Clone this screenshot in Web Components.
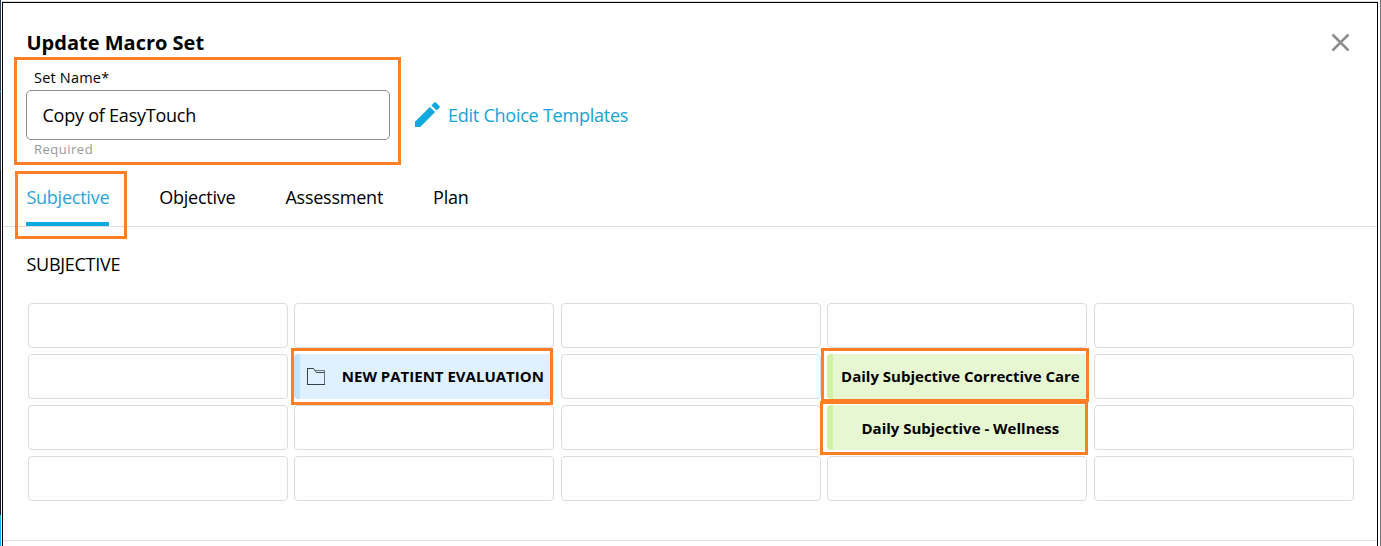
<!DOCTYPE html>
<html lang="en">
<head>
<meta charset="utf-8">
<title>Update Macro Set</title>
<style>
html,body{margin:0;height:100%;overflow:hidden;background:#fff}
body{font-family:"Open Sans","Noto Sans",sans-serif;color:#000}
</style>
</head>
<body>
<macro-dialog></macro-dialog>
<script>
const define=(name,html,setup)=>customElements.define(name,class extends HTMLElement{
  connectedCallback(){
    if(this.shadowRoot)return;
    const t=document.createElement('template');
    t.innerHTML='<style>*{box-sizing:border-box}:host([hidden]){display:none}</style>'+html;
    this.attachShadow({mode:'open'}).append(t.content.cloneNode(true));
    if(setup)setup(this,this.shadowRoot);
  }
});

/* Orange frame laid over the element it is placed in */
define('high-light',`<style>:host{position:absolute;box-sizing:border-box;border:3px solid #ff7f27;z-index:2;pointer-events:none}</style>`);

define('dialog-header',`<style>
:host{display:flex;justify-content:space-between;height:54px;padding:26px 27.5px 0 23.5px}
h1{margin:0;font-size:20px;line-height:28px;font-weight:700}
svg{display:block;margin-top:3.5px}
</style><h1><slot></slot></h1>
<svg width="19" height="19" viewBox="0 0 19 19" role="img" aria-label="Close"><path d="M1.5 1.5L17.5 17.5M17.5 1.5L1.5 17.5" stroke="#8c8c8c" stroke-width="2.5" fill="none"/></svg>`);

define('text-field',`<style>
:host{display:block;width:364px;position:relative}
label,small{display:block;padding-left:8px}
label{font-size:14.5px;line-height:20px;height:23px;padding-top:1px;letter-spacing:.2px;margin-top:10px}
.box{height:50px;border:1px solid #8f8f8f;border-radius:5px;padding-left:15.5px;font-size:18px;line-height:49px;letter-spacing:-.23px}
small{font-size:13px;line-height:18px;color:#999;letter-spacing:.5px}
high-light{left:-12px;top:0;width:387px;height:108px}
</style><label><slot name="label"></slot></label><div class="box"><slot></slot></div><small><slot name="hint"></slot></small><high-light></high-light>`);

define('edit-link',`<style>
:host{display:flex;align-items:center;gap:8px;color:#14a3d8;font-size:18px;line-height:26px;letter-spacing:-.24px}
svg{display:block;margin-top:-1px}
</style><svg width="25" height="25" viewBox="0 0 25 25" fill="#0eaadf"><path d="M0 19.8L14.9 4.9L20.1 10.1L5.2 25H0ZM16.4 3.4L19.2.6Q20.1-.2 21 .6L24.4 4Q25.3 4.9 24.4 5.8L21.6 8.6Z"/></svg><span><slot></slot></span>`);

define('tab-item',`<style>
:host{display:block;position:relative;height:44px;padding-top:2px;font-size:18px;line-height:26px;letter-spacing:-.24px}
:host([active]){color:#2ba4da;border-bottom:4px solid #0eaadf}
high-light{left:-11.4px;top:-11px;width:112px;height:68px}
</style><slot></slot>`,(host,root)=>{if(host.hasAttribute('active'))root.append(document.createElement('high-light'))});

define('tab-bar',`<style>:host{display:flex;gap:50px;height:45px;padding-left:23.4px;border-bottom:1px solid #dedede}</style><slot></slot>`);

define('macro-cell',`<style>
:host{display:flex;position:relative;height:45px;border:1px solid #dcdcdc;border-radius:4px;align-items:center;justify-content:center;font-size:15px;font-weight:700;line-height:20px;white-space:nowrap}
:host([kind]){border:0;border-left:6px solid}
:host([kind=folder]){background:#dff1ff;border-color:#bfe3ff;gap:17px;padding-right:4px}
:host([kind=macro]){background:#e7f7d1;border-color:#d0f2a2}
:host([raised]) span{padding-bottom:2px}
svg{display:none}
:host([kind=folder]) svg{display:block}
</style><svg width="18" height="17" viewBox="0 0 18 17" fill="none" stroke="#37414a"><path d="M.5 0V17M0 .5H6.5L9.5 4.5H17.5"/><path d="M0 16.5H18"/><path d="M8 2.5H17.5V16" stroke="#68747d"/></svg><span><slot></slot></span><slot name="mark"></slot>`);

define('macro-grid',`<style>
:host{display:grid;grid-template-columns:repeat(5,260px);justify-content:space-between;gap:6px;width:1326px;margin:25px 0 0 24.9px}
.one{left:-3px;top:-6px;width:262px;height:57px}
.two{left:-6px;top:-6px;width:268px;height:54px}
.three{left:-7px;top:-4px;width:268px;height:54px}
.one,.two,.three{margin-left:-6px}
</style>`,(host,root)=>{
  const items={6:['folder','NEW PATIENT EVALUATION','one'],8:['macro','Daily Subjective Corrective Care','two'],13:['macro','Daily Subjective - Wellness','three']};
  for(let i=0;i<20;i++){
    const c=document.createElement('macro-cell');
    if(items[i]){
      const[k,t,n]=items[i];
      c.setAttribute('kind',k);c.toggleAttribute('raised',i<10);c.textContent=t;
      const h=document.createElement('high-light');h.className=n;h.slot='mark';c.append(h);
    }
    root.append(c);
  }
});

define('macro-dialog',`<style>
:host{display:grid;grid-template-columns:1px 1px 1fr 2px 1px;height:546px;overflow:hidden}
.strip{background:linear-gradient(#2b3d5e 0 91px,#12b4e8 91px 92px,#2b3d5e 92px 170px,#15182a 170px 515px,#12b4e8 515px)}
.edge{background:#77777b}
.col{display:flex;flex-direction:column;min-width:0}
.col::before{content:"";height:1px;margin-top:1px;background:#d8d8d8;flex:none}
main{flex:1;border:1px solid #000;border-bottom:0;min-height:0}
.form{display:flex;gap:25px;height:125px;padding-left:23px}
edit-link{height:26px;margin-top:45px}
h2{margin:23px 0 0 23.5px;font-size:18px;line-height:28px;font-weight:400;letter-spacing:-.28px}
footer{margin-top:39px;border-top:1px solid #dedede}
</style>
<div class="strip"></div><div></div>
<div class="col"><main>
<dialog-header>Update Macro Set</dialog-header>
<div class="form"><text-field><span slot="label">Set Name*</span>Copy of EasyTouch<span slot="hint">Required</span></text-field><edit-link>Edit Choice Templates</edit-link></div>
<tab-bar><tab-item active>Subjective</tab-item><tab-item>Objective</tab-item><tab-item>Assessment</tab-item><tab-item>Plan</tab-item></tab-bar>
<h2>SUBJECTIVE</h2>
<macro-grid></macro-grid>
<footer></footer>
</main></div><div></div><div class="edge"></div>`);
</script>
</body>
</html>
